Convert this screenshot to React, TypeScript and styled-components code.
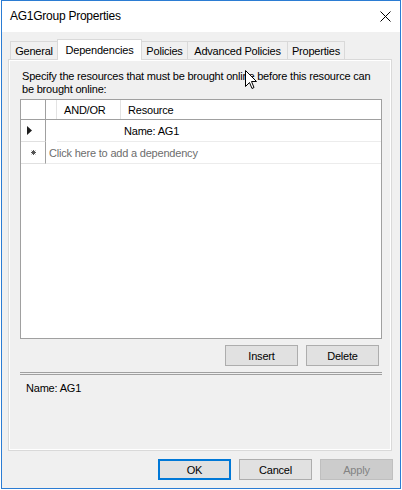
import React from "react";
import styled, { createGlobalStyle } from "styled-components";

const GlobalStyle = createGlobalStyle`
  html, body { margin: 0; padding: 0; background: #ffffff; }
  body {
    font-family: "Liberation Sans", Arial, sans-serif;
    font-size: 11px;
    letter-spacing: -0.2px;
    color: #000000;
  }
  * { box-sizing: border-box; }
`;

const Window = styled.div`
  position: relative;
  margin-left: 1px;
  width: 400px;
  height: 489px;
  border: 1px solid #2b7cd3;
  background: #f0f0f0;
  display: flex;
  flex-direction: column;
`;

const TitleBar = styled.div`
  height: 31px;
  flex: none;
  background: #ffffff;
  display: flex;
  align-items: center;
  justify-content: space-between;
  padding: 0 8px 0 8px;
`;

const Title = styled.div`
  font-size: 12px;
  letter-spacing: -0.25px;
  line-height: 31px;
`;

const CloseGlyph = styled.svg`
  display: block;
  width: 11px;
  height: 11px;
  margin-right: 1px;
`;

const TabStrip = styled.div`
  display: flex;
  align-items: flex-end;
  margin-top: 7px;
  padding-left: 8px;
  height: 20px;
  flex: none;
`;

const Tab = styled.div<{ $w: number; $active?: boolean; $first?: boolean }>`
  width: ${(p) => p.$w}px;
  margin-left: ${(p) => (p.$first ? 0 : -1)}px;
  height: ${(p) => (p.$active ? 21 : 18)}px;
  margin-bottom: ${(p) => (p.$active ? -1 : 0)}px;
  border: 1px solid #d9d9d9;
  border-bottom: none;
  background: ${(p) => (p.$active ? "#ffffff" : "#f0f0f0")};
  position: relative;
  z-index: ${(p) => (p.$active ? 2 : 1)};
  display: flex;
  align-items: center;
  justify-content: center;
  padding: ${(p) => (p.$active ? "0 0 1px 0" : "1px 0 0 0")};
  white-space: nowrap;
`;

const Panel = styled.div`
  margin-left: 6px;
  width: 384px;
  height: 392px;
  flex: none;
  border: 1px solid #d9d9d9;
  box-shadow: inset 0 0 0 1px #ffffff;
  display: flex;
  flex-direction: column;
  padding: 10px 9px 0 11px;
`;

const Description = styled.div`
  margin-left: 2px;
  line-height: 13px;
`;

const DataGrid = styled.div`
  margin-top: 3px;
  height: 240px;
  border: 1px solid #a0a0a0;
  background: #ffffff;
  display: flex;
  flex-direction: column;
`;

const HeaderRow = styled.div`
  display: flex;
  height: 20px;
  border-bottom: 1px solid #a0a0a0;
`;

const HeaderCell = styled.div<{ $w?: number; $edge?: boolean }>`
  ${(p) => (p.$w ? `width: ${p.$w}px; flex: none;` : "flex: 1;")}
  border-right: 1px solid ${(p) => (p.$edge ? "#a0a0a0" : "#e3e3e3")};
  display: flex;
  align-items: center;
  padding-left: 7px;
  &:last-child { border-right: none; }
`;

const Row = styled.div`
  display: flex;
  height: 22px;
`;

const RowMarker = styled.div<{ $center?: boolean }>`
  width: 25px;
  flex: none;
  border-right: 1px solid #a0a0a0;
  border-bottom: 1px solid #e0e0e0;
  display: flex;
  align-items: center;
  justify-content: ${(p) => (p.$center ? "center" : "flex-start")};
  padding-left: ${(p) => (p.$center ? 0 : 6)}px;
`;

const Spacer = styled.div`
  width: 11px;
  flex: none;
`;

const Cell = styled.div<{ $w?: number; $muted?: boolean; $pad?: number }>`
  ${(p) => (p.$w ? `width: ${p.$w}px; flex: none;` : "flex: 1;")}
  border-bottom: 1px solid #ececec;
  display: flex;
  align-items: center;
  padding-left: ${(p) => p.$pad ?? 3}px;
  color: ${(p) => (p.$muted ? "#6d6d6d" : "#000000")};
  white-space: nowrap;
`;

const ButtonRow = styled.div`
  display: flex;
  justify-content: flex-end;
  gap: 8px;
  margin-top: 6px;
  padding-right: 3px;
`;

const Button = styled.button<{ $variant?: "default" | "disabled" }>`
  width: 73px;
  height: 21px;
  padding: 0;
  font: inherit;
  letter-spacing: inherit;
  color: ${(p) => (p.$variant === "disabled" ? "#838383" : "#000000")};
  background: ${(p) => (p.$variant === "disabled" ? "#cccccc" : "#e1e1e1")};
  border: ${(p) =>
    p.$variant === "default"
      ? "2px solid #0078d7"
      : p.$variant === "disabled"
      ? "1px solid #bfbfbf"
      : "1px solid #adadad"};
  display: flex;
  align-items: center;
  justify-content: center;
`;

const Separator = styled.div`
  margin-top: 6px;
  height: 3px;
  border-top: 1px solid #a0a0a0;
  border-bottom: 1px solid #a0a0a0;
`;

const SelectedName = styled.div`
  margin-top: 7px;
  margin-left: 6px;
  line-height: 13px;
`;

const Footer = styled.div`
  display: flex;
  justify-content: flex-end;
  gap: 8px;
  margin-top: 8px;
  padding-right: 7px;
`;

const Cursor = styled.svg`
  position: absolute;
  left: 243px;
  top: 69px;
  width: 12px;
  height: 19px;
  z-index: 5;
`;

const tabs = [
  { label: "General", w: 48 },
  { label: "Dependencies", w: 85, active: true },
  { label: "Policies", w: 47 },
  { label: "Advanced Policies", w: 101 },
  { label: "Properties", w: 58 },
];

export default function App() {
  return (
    <>
      <GlobalStyle />
      <Window>
        <TitleBar>
          <Title>AG1Group Properties</Title>
          <CloseGlyph viewBox="0 0 11 11">
            <path d="M0.5 0.5 L10.5 10.5 M10.5 0.5 L0.5 10.5" stroke="#000" strokeWidth="1" fill="none" />
          </CloseGlyph>
        </TitleBar>
        <TabStrip>
          {tabs.map((t, i) => (
            <Tab key={t.label} $w={t.w} $active={t.active} $first={i === 0}>
              {t.label}
            </Tab>
          ))}
        </TabStrip>
        <Panel>
          <Description>
            Specify the resources that must be brought online before this resource can
            <br />
            be brought online:
          </Description>
          <DataGrid>
            <HeaderRow>
              <HeaderCell $w={25} $edge />
              <HeaderCell $w={11} />
              <HeaderCell $w={64}>AND/OR</HeaderCell>
              <HeaderCell>Resource</HeaderCell>
            </HeaderRow>
            <Row>
              <RowMarker>
                <svg width="5" height="9" viewBox="0 0 5 9">
                  <path d="M0 0 L5 4.5 L0 9 Z" fill="#1e1e1e" />
                </svg>
              </RowMarker>
              <Spacer />
              <Cell $w={64} />
              <Cell>Name: AG1</Cell>
            </Row>
            <Row>
              <RowMarker $center>
                <svg width="5" height="5" viewBox="0 0 5 5">
                  <path d="M2.5 0 V5 M0 2.5 H5 M0.7 0.7 L4.3 4.3 M4.3 0.7 L0.7 4.3" stroke="#555" strokeWidth="1" />
                </svg>
              </RowMarker>
              <Cell $muted $pad={3}>Click here to add a dependency</Cell>
            </Row>
          </DataGrid>
          <ButtonRow>
            <Button>Insert</Button>
            <Button>Delete</Button>
          </ButtonRow>
          <Separator />
          <SelectedName>Name: AG1</SelectedName>
        </Panel>
        <Footer>
          <Button $variant="default">OK</Button>
          <Button>Cancel</Button>
          <Button $variant="disabled">Apply</Button>
        </Footer>
        <Cursor viewBox="0 0 12 19">
          <path
            d="M0.5 0.5 L0.5 16.5 L4.5 12.5 L7 18.5 L9 17.5 L6.5 11.5 L11.5 11.5 Z"
            fill="#ffffff"
            stroke="#000000"
            strokeWidth="1"
            strokeLinejoin="miter"
          />
        </Cursor>
      </Window>
    </>
  );
}
